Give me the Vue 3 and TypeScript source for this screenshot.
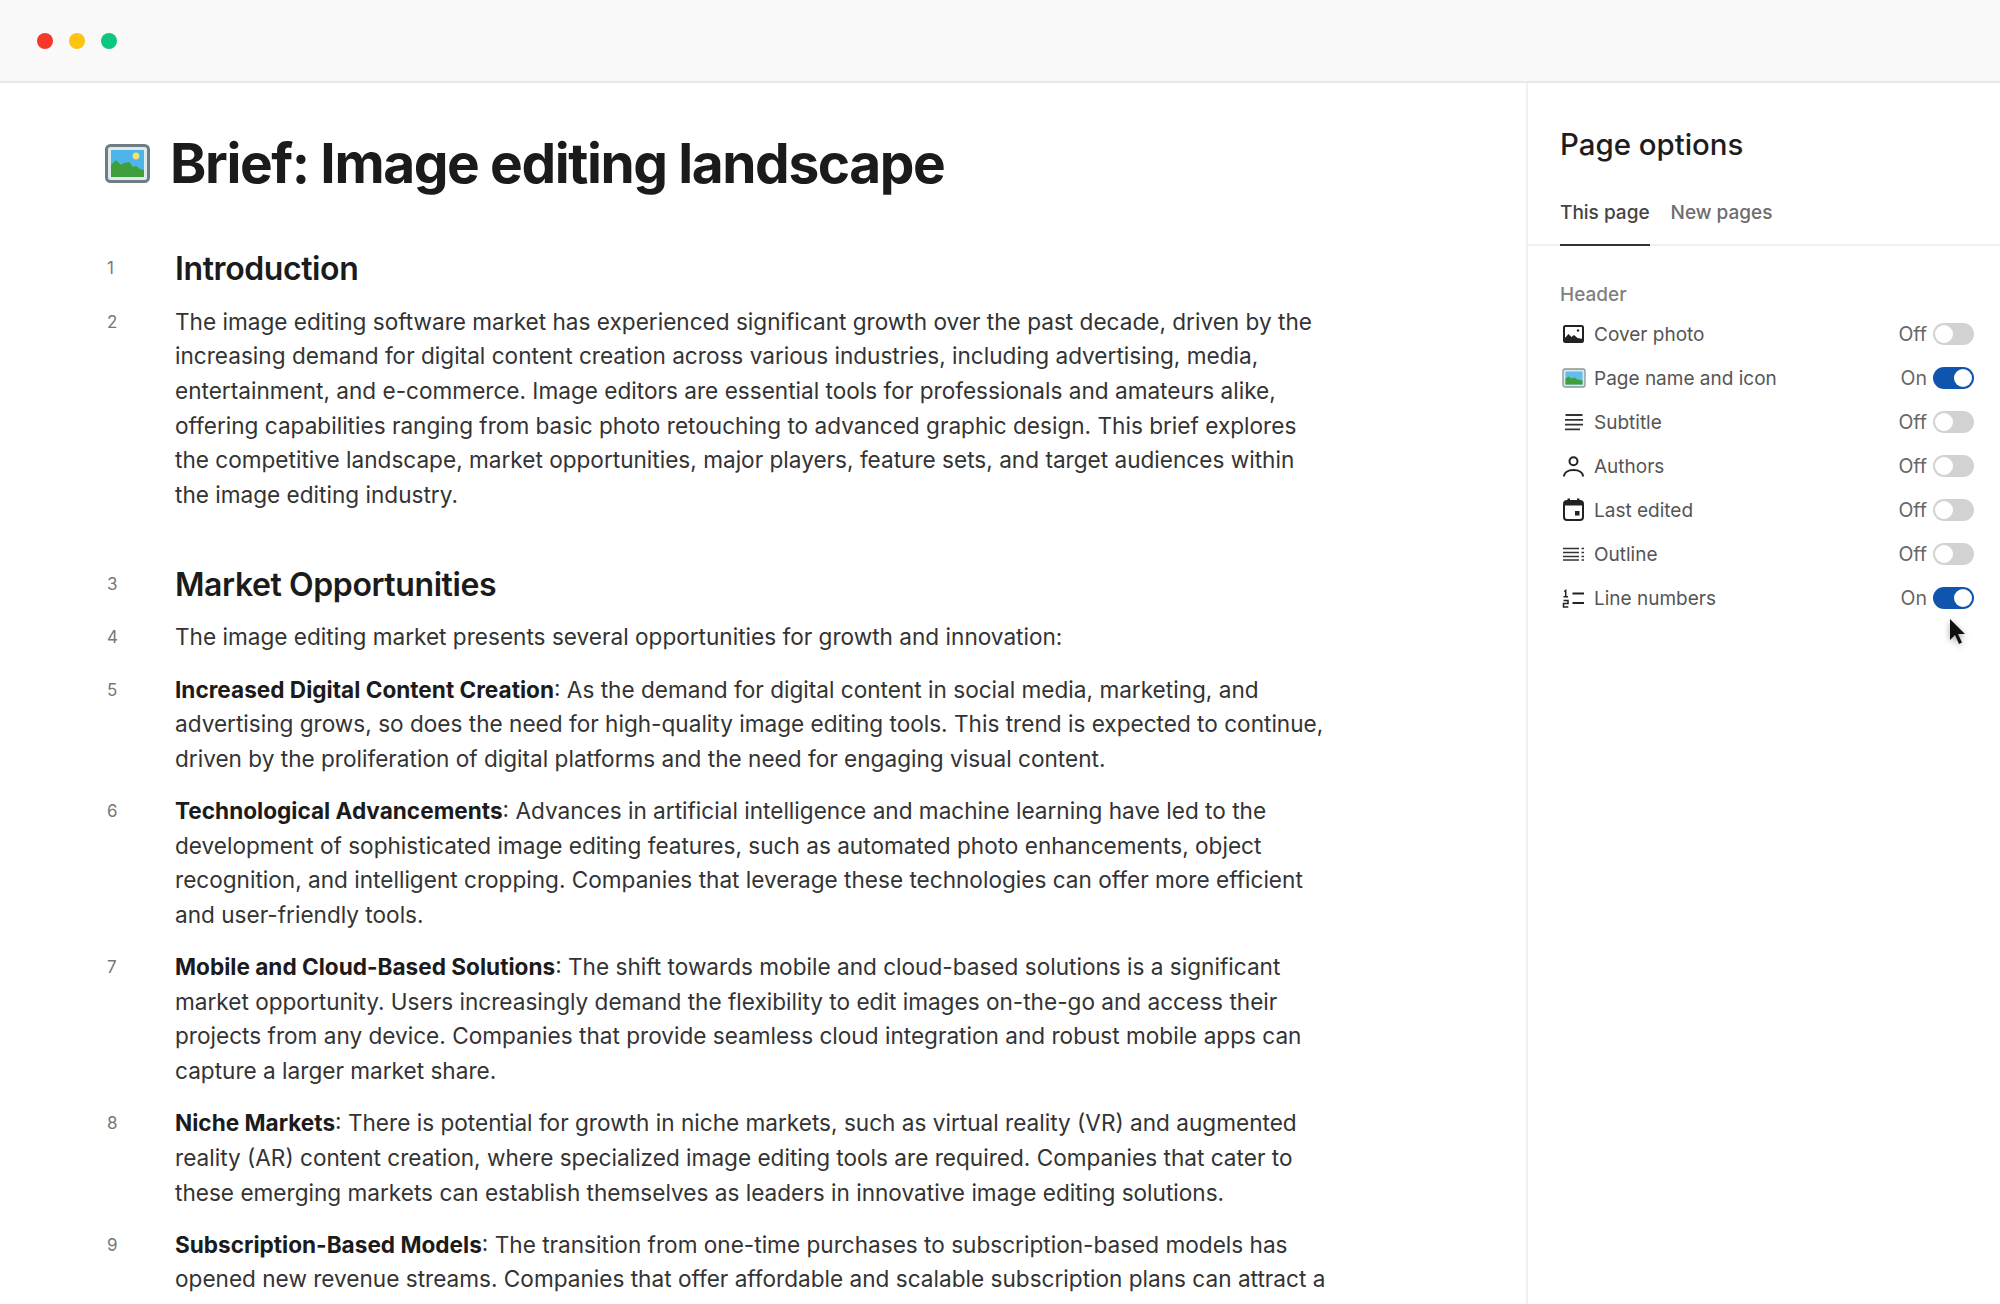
<template>
  <div class="window">
    <header class="titlebar">
      <span class="dot red"></span>
      <span class="dot yellow"></span>
      <span class="dot green"></span>
    </header>

    <div class="body">
      <main class="doc">
        <div class="doc-title">
          <svg class="pic-icon" viewBox="0 0 45 39">
            <rect x="1.5" y="1.5" width="42" height="36" rx="4" fill="#dfe9ee" stroke="#6f7c84" stroke-width="3" />
            <rect x="6" y="6" width="33" height="27" fill="#4fb4ea" />
            <circle cx="31" cy="12" r="3.4" fill="#f4e36a" />
            <path d="M6 33V21l5-5 5 5 3-2 5-1 4 5 3-1 4 3 4 1v7z" fill="#3f9f3c" />
          </svg>
          <h1>Brief: Image editing landscape</h1>
        </div>

        <section
          v-for="(block, i) in blocks"
          :key="i"
          class="row"
          :class="{ heading: block.heading }"
        >
          <span class="num">{{ i + 1 }}</span>
          <div class="content">
            <h2 v-if="block.heading">{{ block.heading }}</h2>
            <p v-else>
              <strong v-if="block.lead">{{ block.lead }}</strong>
              <template v-for="(line, j) in block.lines" :key="j">{{ line }}<br v-if="j < block.lines!.length - 1" /></template>
            </p>
          </div>
        </section>
      </main>

      <aside class="panel">
        <h3>Page options</h3>
        <nav class="tabs">
          <span class="tab active">This page</span>
          <span class="tab">New pages</span>
        </nav>
        <div class="options">
          <div class="group-label">Header</div>
          <div v-for="opt in options" :key="opt.label" class="option">
            <svg class="opt-icon" viewBox="0 0 24 24">
              <template v-if="opt.icon === 'cover'">
                <rect x="2" y="4" width="19" height="16" rx="1.500" fill="none" stroke="#222" stroke-width="2" />
                <path d="M2 20v-3l4.500-5 3 3 2.500-2 3.500 3 5.500 1v3z" fill="#222" />
                <circle cx="16" cy="8.500" r="1.200" fill="#222" />
              </template>
              <template v-else-if="opt.icon === 'page'">
                <rect x="1" y="3" width="22" height="18" rx="2" fill="#dbe7ec" stroke="#8b979d" stroke-width="1.300" />
                <rect x="3.500" y="5.500" width="17" height="13" fill="#62bdec" />
                <path d="M3.500 18.500v-6l3-2 3 2 3-1 3 2 5 1v4z" fill="#3f9f3c" />
              </template>
              <template v-else-if="opt.icon === 'subtitle'">
                <path d="M3.500 5h17M3 9.800h18M3 14.600h18M3 19.300h15" fill="none" stroke="#333" stroke-width="1.800" />
              </template>
              <template v-else-if="opt.icon === 'authors'">
                <circle cx="11.500" cy="7.200" r="4" fill="none" stroke="#222" stroke-width="2" />
                <path d="M2 22.500c0-4 4-6.500 9.500-6.500s9.500 2.500 9.500 6.500" fill="none" stroke="#222" stroke-width="2" />
              </template>
              <template v-else-if="opt.icon === 'calendar'">
                <rect x="2" y="3" width="19" height="19" rx="3" fill="none" stroke="#222" stroke-width="2" />
                <path d="M2 3h19v4.500H2zM5.500 0.500h2.500V4H5.500zM15 0.500h2.500V4H15z" fill="#222" />
                <rect x="13" y="13" width="4.500" height="4.500" fill="#222" />
              </template>
              <template v-else-if="opt.icon === 'outline'">
                <path d="M1 6.500h16M1 10.500h16M1 14.500h16M1 18h16" fill="none" stroke="#333" stroke-width="1.700" />
                <path d="M19.500 6.500h2.500M19.500 10.500h2.500M19.500 14.500h2.500M19.500 18h2.500" fill="none" stroke="#333" stroke-width="1.700" />
              </template>
              <template v-else>
                <path d="M2.200 5.500l1.500-1v6M1.500 10.700h4.500M1.500 14.500h4.500v3H1.500v3.500h4.800" fill="none" stroke="#222" stroke-width="1.500" />
                <path d="M10.500 7.500h11.500M10.500 17h11.500" fill="none" stroke="#222" stroke-width="2" />
              </template>
            </svg>
            <span class="opt-label">{{ opt.label }}</span>
            <span class="opt-state">{{ opt.on ? 'On' : 'Off' }}</span>
            <span class="toggle" :class="{ on: opt.on }"><span class="knob"></span></span>
          </div>
        </div>
      </aside>
    </div>

    <svg class="cursor" viewBox="0 0 20 30">
      <path d="M3 1v21l5-5 4 9 3-1.500-4-8.500h7z" fill="#111" />
    </svg>
  </div>
</template>

<script setup lang="ts">
interface Block {
  heading?: string
  lead?: string
  lines?: string[]
}

interface Option {
  label: string
  icon: string
  on: boolean
}

const blocks: Block[] = [
  { heading: 'Introduction' },
  {
    lines: [
      'The image editing software market has experienced significant growth over the past decade, driven by the',
      'increasing demand for digital content creation across various industries, including advertising, media,',
      'entertainment, and e-commerce. Image editors are essential tools for professionals and amateurs alike,',
      'offering capabilities ranging from basic photo retouching to advanced graphic design. This brief explores',
      'the competitive landscape, market opportunities, major players, feature sets, and target audiences within',
      'the image editing industry.',
    ],
  },
  { heading: 'Market Opportunities' },
  { lines: ['The image editing market presents several opportunities for growth and innovation:'] },
  {
    lead: 'Increased Digital Content Creation',
    lines: [
      ': As the demand for digital content in social media, marketing, and',
      'advertising grows, so does the need for high-quality image editing tools. This trend is expected to continue,',
      'driven by the proliferation of digital platforms and the need for engaging visual content.',
    ],
  },
  {
    lead: 'Technological Advancements',
    lines: [
      ': Advances in artificial intelligence and machine learning have led to the',
      'development of sophisticated image editing features, such as automated photo enhancements, object',
      'recognition, and intelligent cropping. Companies that leverage these technologies can offer more efficient',
      'and user-friendly tools.',
    ],
  },
  {
    lead: 'Mobile and Cloud-Based Solutions',
    lines: [
      ': The shift towards mobile and cloud-based solutions is a significant',
      'market opportunity. Users increasingly demand the flexibility to edit images on-the-go and access their',
      'projects from any device. Companies that provide seamless cloud integration and robust mobile apps can',
      'capture a larger market share.',
    ],
  },
  {
    lead: 'Niche Markets',
    lines: [
      ': There is potential for growth in niche markets, such as virtual reality (VR) and augmented',
      'reality (AR) content creation, where specialized image editing tools are required. Companies that cater to',
      'these emerging markets can establish themselves as leaders in innovative image editing solutions.',
    ],
  },
  {
    lead: 'Subscription-Based Models',
    lines: [
      ': The transition from one-time purchases to subscription-based models has',
      'opened new revenue streams. Companies that offer affordable and scalable subscription plans can attract a',
    ],
  },
]

const options: Option[] = [
  { label: 'Cover photo', icon: 'cover', on: false },
  { label: 'Page name and icon', icon: 'page', on: true },
  { label: 'Subtitle', icon: 'subtitle', on: false },
  { label: 'Authors', icon: 'authors', on: false },
  { label: 'Last edited', icon: 'calendar', on: false },
  { label: 'Outline', icon: 'outline', on: false },
  { label: 'Line numbers', icon: 'numbers', on: true },
]
</script>

<style>
html, body { margin: 0; background: #fff; }
</style>

<style scoped>
.window { position: relative; width: 2000px; height: 1304px; overflow: hidden; background: #fff; font-family: Inter, "Liberation Sans", sans-serif; color: #1d1d1d; }
.titlebar { display: flex; align-items: center; gap: 16px; height: 81px; padding-left: 37px; background: #f9f9f9; border-bottom: 2px solid #e8e8e8; }
.dot { width: 16px; height: 16px; border-radius: 50%; }
.red { background: #f6372c; }
.yellow { background: #fdc40f; }
.green { background: #0bc87f; }

.body { display: flex; height: 1221px; }
.doc { width: 1528px; box-sizing: border-box; padding: 48px 0 0 105px; border-right: 2px solid #f0f0f0; overflow: hidden; }
.doc-title { display: flex; align-items: center; gap: 20px; margin-bottom: 56px; }
.pic-icon { width: 45px; height: 39px; flex: none; }
h1 { margin: 0; font-size: 55px; line-height: 64px; font-weight: 700; letter-spacing: -1.4px; color: #1b1b1b; white-space: nowrap; }

.row { display: flex; margin-bottom: 17.300px; }
.row.heading { margin-top: 54px; margin-bottom: 18.500px; }
.row:first-of-type { margin-top: 0; }
.num { width: 70px; flex: none; padding-left: 2px; box-sizing: border-box; font-size: 17px; line-height: 35px; color: #777; }
h2 { margin: 0; font-size: 32px; line-height: 35px; font-weight: 600; letter-spacing: -0.4px; color: #1b1b1b; white-space: nowrap; }
p { margin: 0; font-size: 22.600px; line-height: 34.700px; color: #333; white-space: nowrap; }
strong { font-weight: 700; color: #1b1b1b; }

.panel { flex: 1; min-width: 0; padding-top: 44px; }
h3 { margin: 0 0 35px 32px; font-size: 29.400px; line-height: 36px; font-weight: 500; color: #1d1d1d; }
.tabs { display: flex; gap: 21px; padding-left: 32px; border-bottom: 2px solid #f0f0f0; }
.tab { padding-bottom: 16px; margin-bottom: -2px; font-size: 19px; line-height: 30px; font-weight: 500; color: #6d6d6d; }
.tab.active { color: #444; border-bottom: 2px solid #333; }
.options { padding: 36px 26px 0 32px; }
.group-label { margin-bottom: 4px; font-size: 19px; line-height: 26px; font-weight: 500; color: #808080; }
.option { display: flex; align-items: center; height: 44px; }
.opt-icon { width: 24px; height: 24px; flex: none; margin-left: 2px; margin-right: 8px; }
.opt-label { flex: 1; font-size: 19px; color: #555; }
.opt-state { margin-right: 6px; font-size: 19.500px; color: #666; }
.toggle { display: flex; width: 41px; height: 22px; padding: 2px; box-sizing: border-box; border-radius: 11px; background: #d2d2d2; }
.toggle.on { justify-content: flex-end; background: #0f55ad; }
.knob { width: 18px; height: 18px; border-radius: 50%; background: #fff; }

.cursor { position: absolute; left: 1947px; top: 618px; width: 20px; height: 30px; filter: drop-shadow(0 2px 3px rgba(0,0,0,0.35)); }
</style>
